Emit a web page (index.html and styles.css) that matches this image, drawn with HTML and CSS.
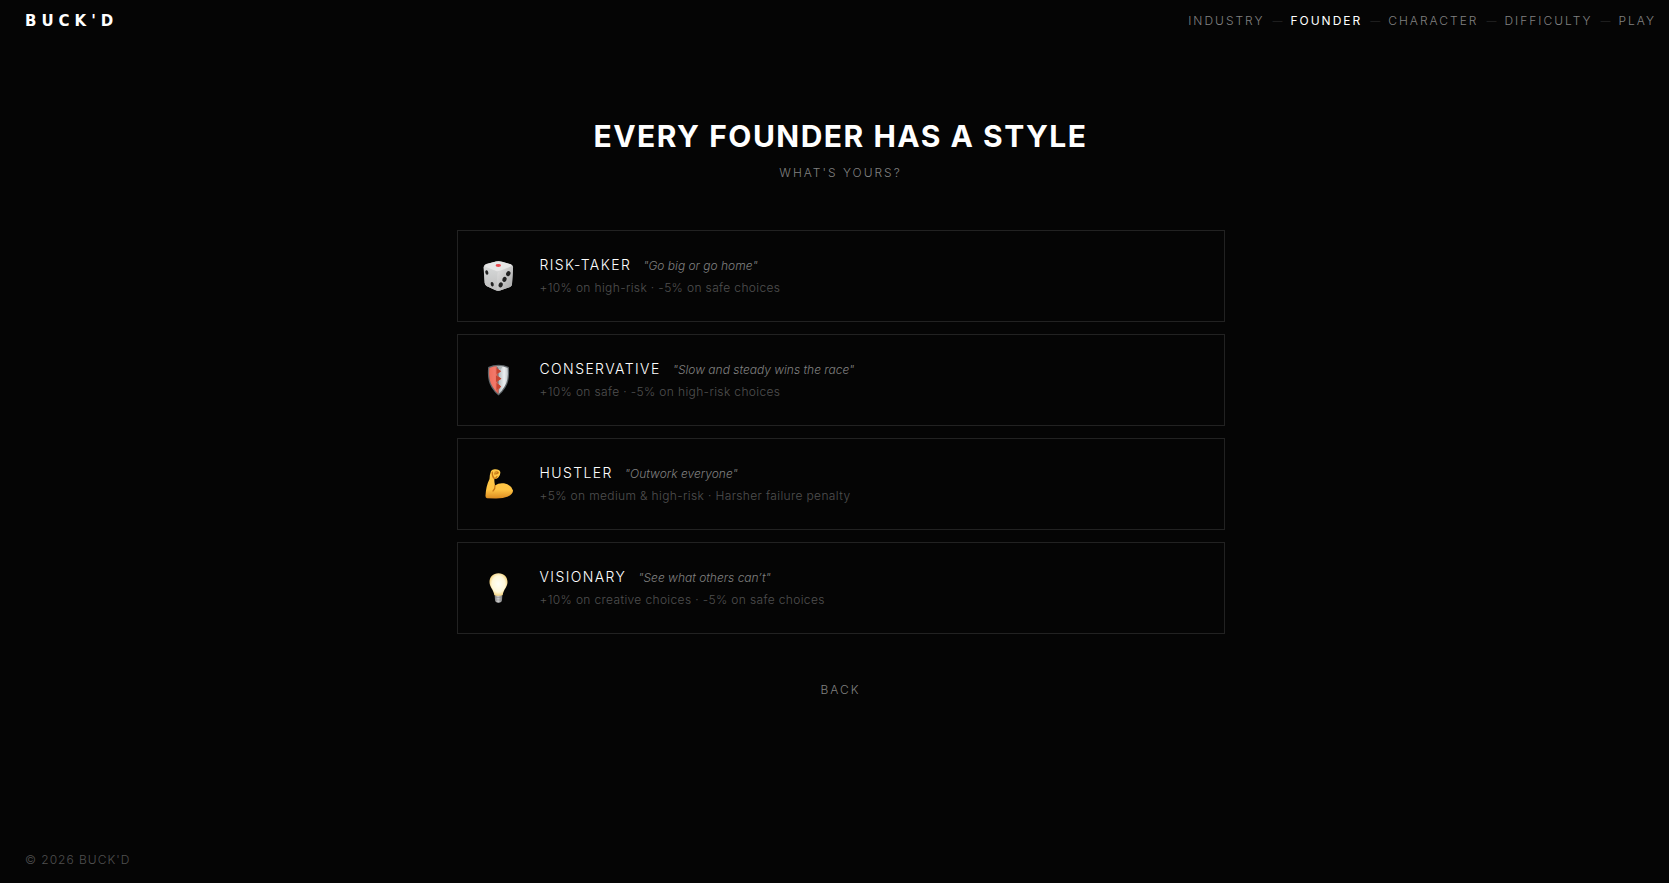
FILE: index.html
```html
<!DOCTYPE html>
<html lang="en">
<head>
  <meta charset="UTF-8" />
  <meta name="viewport" content="width=device-width, initial-scale=1.0" />
  <title>BUCK'D</title>
  <link rel="stylesheet" href="styles.css">
</head>
<body>
  <header class="topbar">
    <a class="logo" href="#">BUCK'D</a>
    <nav class="steps">
      <span>INDUSTRY</span>
      <span class="dash">—</span>
      <span class="active">FOUNDER</span>
      <span class="dash">—</span>
      <span>CHARACTER</span>
      <span class="dash">—</span>
      <span>DIFFICULTY</span>
      <span class="dash">—</span>
      <span>PLAY</span>
    </nav>
  </header>

  <main class="content">
    <h1>EVERY FOUNDER HAS A STYLE</h1>
    <p class="subtitle">WHAT'S YOURS?</p>

    <div class="cards">
      <button class="card">
        <svg class="icon" viewBox="0 0 32 32" aria-hidden="true">
          <defs>
            <linearGradient id="dieRight" x1="0" y1="0" x2="1" y2="1">
              <stop offset="0" stop-color="#e2e2e2" /><stop offset="1" stop-color="#a6a6a6" />
            </linearGradient>
            <linearGradient id="dieLeft" x1="0" y1="0" x2="0" y2="1">
              <stop offset="0" stop-color="#d6d8d8" /><stop offset="1" stop-color="#bdbdbd" />
            </linearGradient>
          </defs>
          <path d="M2 7Q1 6 4 4L14 1.5Q17 .8 20 1.7L29 4.5Q31.500 5.500 31 8L30 24Q30 26 28 27L18 30.500Q15.500 31.300 13 30L4.500 26Q3 25 2.700 23Z" fill="#d2d3d3" />
          <path d="M1.500 7Q2 6.500 4 7L14 11Q15.500 12 15.500 14L15 30.800L5 26.300Q3 25 2.700 23Z" fill="url(#dieLeft)" />
          <path d="M15.500 14Q15.600 12 17.500 11L29 6.500Q31.200 6 31 8L30 24Q30 26 28 27L18 30.500L15 30.800Z" fill="url(#dieRight)" />
          <path d="M3 5.500Q3 4.500 5 4L14 1.500Q17 .8 20 1.700L28 4Q31 5 28.500 6.500L18 10.800Q15.800 11.700 13.500 10.700L4 7Q2.500 6.300 3 5.500Z" fill="#e6e6e6" />
          <ellipse cx="16.300" cy="5.500" rx="2.700" ry="1.400" fill="#e9474c" />
          <g fill="#222">
            <ellipse cx="4.800" cy="12.500" rx="1.500" ry="2.300" transform="rotate(-14 4.800 12.500)" />
            <ellipse cx="10.200" cy="24.200" rx="1.500" ry="2.300" transform="rotate(-14 10.200 24.200)" />
            <ellipse cx="26.300" cy="13.700" rx="2.100" ry="2.600" transform="rotate(25 26.300 13.700)" />
            <ellipse cx="22.500" cy="19.300" rx="2.100" ry="2.600" transform="rotate(25 22.500 19.300)" />
            <ellipse cx="18.700" cy="24.800" rx="2.100" ry="2.600" transform="rotate(25 18.700 24.800)" />
          </g>
        </svg>
        <span class="info">
          <span class="heading"><span class="name">RISK-TAKER</span><em>"Go big or go home"</em></span>
          <span class="effect">+10% on high-risk · -5% on safe choices</span>
        </span>
      </button>

      <button class="card">
        <svg class="icon" viewBox="0 0 32 32" aria-hidden="true">
          <defs>
            <linearGradient id="shieldWhite">
              <stop offset="0" stop-color="#b3b9bd" /><stop offset=".6" stop-color="#edf0f2" /><stop offset="1" stop-color="#c2c6c9" />
            </linearGradient>
            <linearGradient id="shieldRed">
              <stop offset="0" stop-color="#ee6d5b" /><stop offset=".5" stop-color="#f3796b" /><stop offset="1" stop-color="#b83c2a" />
            </linearGradient>
          </defs>
          <path d="M16.500 .8Q22 .8 26.800 3Q28.200 16 23.500 23.500Q20.500 28.500 16.500 31.400Q12.500 28.500 9.500 23.500Q4.800 16 6.200 3Q11 .8 16.500 .8Z" fill="#62686c" />
          <path d="M16.500 2Q21.500 2 25.700 3.900Q26.800 16 22.500 22.500Q19.800 27.200 16.500 30Z" fill="url(#shieldWhite)" />
          <path d="M16.500 2Q11.500 2 7.300 3.900Q6.200 16 10.500 22.500Q13.200 27.200 16.500 30V26L19 22.500L15.500 19V17.500L19 14.500L15.500 11.500V10L19 7L14.500 4Z" fill="url(#shieldRed)" />
          <path d="M14.500 4V10L19 7.500ZM14 11.500V18L19.500 14.800ZM14.500 19V26L19 22.500Z" fill="#c64431" />
          <path d="M14.200 2.100L20.500 2.400L18.500 6Z" fill="#aeb4b6" />
        </svg>
        <span class="info">
          <span class="heading"><span class="name">CONSERVATIVE</span><em>"Slow and steady wins the race"</em></span>
          <span class="effect">+10% on safe · -5% on high-risk choices</span>
        </span>
      </button>

      <button class="card">
        <svg class="icon" viewBox="0 0 32 32" aria-hidden="true">
          <defs>
            <linearGradient id="arm" x1="0" y1="0" x2="0" y2="1">
              <stop offset="0" stop-color="#ffca48" /><stop offset=".7" stop-color="#ffc444" /><stop offset="1" stop-color="#dc8b20" />
            </linearGradient>
          </defs>
          <path d="M9 3Q10.500 .8 13.500 1.200Q17.500 1.300 18.300 4Q18.600 7 16.500 9.300Q14.500 11.500 12.300 10.800Q12.200 14 13 17.500Q17 14.500 22 15.300Q29 16.500 31 22.500Q31.200 26 26 28.500Q21 30.700 13 30.500L5 30.300Q3.300 30 3.500 27.500Q4 18 7.500 11Q7.800 6 9 3Z" fill="url(#arm)" />
          <path d="M13 4.200Q15.500 3.200 16.300 4.800Q14.800 6.200 12.500 5.800M10.300 4Q9.800 8 12.300 10.700Q14 10.300 15 8.500M13 17.500Q13.500 20.500 11 23" fill="none" stroke="#c77716" stroke-width="1.200" stroke-linecap="round" />
        </svg>
        <span class="info">
          <span class="heading"><span class="name">HUSTLER</span><em>"Outwork everyone"</em></span>
          <span class="effect">+5% on medium &amp; high-risk · Harsher failure penalty</span>
        </span>
      </button>

      <button class="card">
        <svg class="icon" viewBox="0 0 32 32" aria-hidden="true">
          <defs>
            <radialGradient id="glass" cx=".5" cy=".48" r=".55">
              <stop offset="0" stop-color="#fffff6" /><stop offset=".65" stop-color="#fff8d8" /><stop offset="1" stop-color="#f2cd72" />
            </radialGradient>
            <linearGradient id="socket">
              <stop offset="0" stop-color="#777" /><stop offset=".45" stop-color="#d0d0d0" /><stop offset="1" stop-color="#777" />
            </linearGradient>
          </defs>
          <path d="M12.500 22H20.500L20 28Q19.800 30.600 16.500 30.800Q13.200 30.600 13 28Z" fill="url(#socket)" />
          <path d="M16.500 1.200C22 1.200 25.500 5 25.500 10C25.500 15 21.700 17 20.700 23Q16.500 24.700 12.300 23C11.300 17 7.500 15 7.500 10C7.500 5 11 1.200 16.500 1.200Z" fill="url(#glass)" />
          <path d="M13 25.500H20M13.300 28H19.700" stroke="#888" stroke-width=".5" />
        </svg>
        <span class="info">
          <span class="heading"><span class="name">VISIONARY</span><em>"See what others can’t"</em></span>
          <span class="effect">+10% on creative choices · -5% on safe choices</span>
        </span>
      </button>
    </div>

    <button class="back">BACK</button>
  </main>

  <footer>© 2026 BUCK'D</footer>
</body>
</html>
```

FILE: styles.css
```css
:root {
  --bg: #050505;
  --text: #fff;
  --muted: #808080;
  --dim: #505050;
  --line: #222;
}
* {
  margin: 0;
  padding: 0;
  box-sizing: border-box;
}
body {
  font-family: Inter, sans-serif;
  font-size: 12px;
  font-weight: 300;
  line-height: 18px;
  background: var(--bg);
  color: var(--text);
  min-height: 100vh;
  display: flex;
  flex-direction: column;
}
button {
  font: inherit;
  color: inherit;
  background: none;
  border: none;
  cursor: pointer;
}
.topbar {
  display: flex;
  justify-content: space-between;
  align-items: center;
  padding: 12px 13px 12px 25px;
}
.logo {
  font-family: "DejaVu Sans", sans-serif;
  font-size: 15px;
  font-weight: 700;
  letter-spacing: 5px;
  color: var(--text);
  text-decoration: none;
}
.steps {
  display: flex;
  gap: 8px;
  letter-spacing: 2px;
  color: var(--muted);
}
.steps .active {
  font-weight: 400;
  color: var(--text);
}
.steps .dash {
  font-size: 10px;
  color: #333;
  letter-spacing: 0;
}
.content {
  flex: 1;
  display: flex;
  flex-direction: column;
  align-items: center;
  padding: 74px 0 24px 12px;
}
h1 {
  font-size: 30px;
  line-height: 40px;
  font-weight: 700;
  letter-spacing: 0.05em;
}
.subtitle {
  margin-top: 8px;
  letter-spacing: 2px;
  color: var(--muted);
}
.cards {
  width: 100%;
  max-width: 768px;
  margin-top: 48px;
  display: flex;
  flex-direction: column;
  gap: 12px;
}
.card {
  display: flex;
  align-items: center;
  gap: 26px;
  padding: 24px;
  border: 1px solid var(--line);
  text-align: left;
}
.card:hover {
  border-color: var(--muted);
}
.icon {
  width: 32px;
  height: 32px;
}
.info {
  display: flex;
  flex-direction: column;
  gap: 3px;
}
.heading {
  display: flex;
  align-items: baseline;
  gap: 12px;
  line-height: 20px;
}
.name {
  font-size: 14px;
  letter-spacing: 0.1em;
}
.heading em {
  color: var(--muted);
}
.effect {
  letter-spacing: 0.03em;
  color: var(--dim);
}
.back {
  margin-top: 47px;
  letter-spacing: 2px;
  color: var(--muted);
}
footer {
  padding: 16px 25px 14px;
  letter-spacing: 1px;
  color: var(--dim);
}
```
